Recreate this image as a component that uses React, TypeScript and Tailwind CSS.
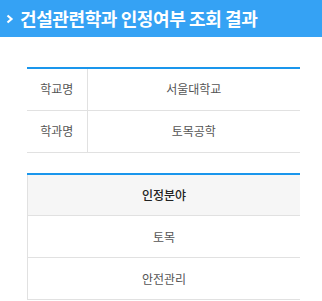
const font = { fontFamily: '"Noto Sans CJK KR", "Noto Sans", sans-serif' }

const schoolInfo = [
  { label: '학교명', value: '서울대학교' },
  { label: '학과명', value: '토목공학' },
]

const fields = ['토목', '안전관리']

export default function App() {
  return (
    <div className="w-[322px] h-[301px] bg-white overflow-hidden" style={font}>
      <div className="h-[37px] bg-[#35a2f4] flex items-center pl-[6px] gap-[6px]">
        <svg width="8" height="10" viewBox="0 0 8 10" className="shrink-0">
          <path d="M1.5 1.5 L5.5 5 L1.5 8.5" stroke="white" strokeWidth="2.2" fill="none" />
        </svg>
        <h1 className="text-white text-[18px] font-semibold tracking-[-0.4px]">건설관련학과 인정여부 조회 결과</h1>
      </div>

      <div className="px-[27px] pt-[30px]">
        <table className="w-[273px] border-t-2 border-[#1a96ec] border-collapse text-[12px] text-[#555]">
          <tbody>
            {schoolInfo.map((row) => (
              <tr key={row.label} className="h-[42px] border-b border-[#e1e1e1]">
                <td className="w-[60px] text-center border-r border-[#e1e1e1] p-0">{row.label}</td>
                <td className="text-center p-0">{row.value}</td>
              </tr>
            ))}
          </tbody>
        </table>

        <table className="mt-[20px] w-[273px] border-t-2 border-[#1a96ec] border-l border-l-[#e1e1e1] border-collapse text-[12px] text-[#555]">
          <thead>
            <tr className="h-[42px] bg-[#f6f6f6] border-b border-[#e1e1e1]">
              <th className="text-center font-medium text-[#222] p-0">인정분야</th>
            </tr>
          </thead>
          <tbody>
            {fields.map((f) => (
              <tr key={f} className="h-[42px] border-b border-[#e1e1e1]">
                <td className="text-center p-0">{f}</td>
              </tr>
            ))}
          </tbody>
        </table>
      </div>
    </div>
  )
}
